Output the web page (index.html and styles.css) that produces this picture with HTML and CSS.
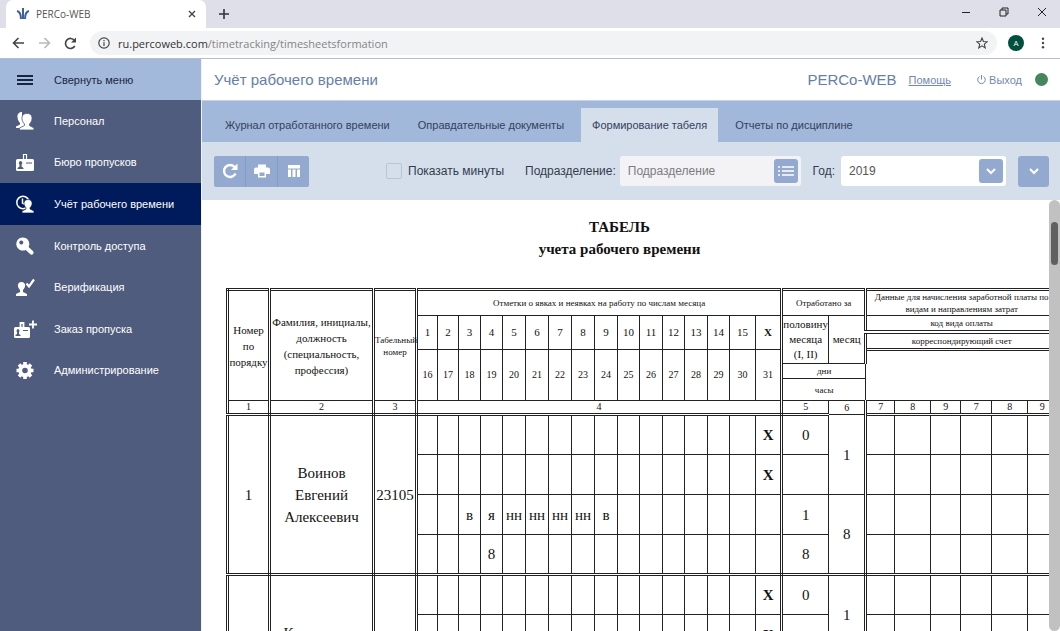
FILE: index.html
```html
<!DOCTYPE html>
<html lang="ru">
<head>
<meta charset="utf-8">
<title>PERCo-WEB</title>
<link rel="stylesheet" href="styles.css">
</head>
<body>
<div class="window">
  <header class="chrome">
    <div class="tabstrip">
      <div class="browser-tab">
        <svg class="favicon" viewBox="0 0 14 12" fill="none" stroke="#3d6199" stroke-width="2"><path d="M7 0V11"/><path d="M1 3Q5 4 5 11"/><path d="M13 3Q9 4 9 11"/></svg>
        <span class="browser-tab-title">PERCo-WEB</span>
        <button class="plain" aria-label="Закрыть вкладку"><svg width="8" height="8" viewBox="0 0 8 8" stroke="#444" stroke-width="1.4"><path d="M1 1L7 7M7 1L1 7"/></svg></button>
      </div>
      <button class="plain new-tab" aria-label="Новая вкладка"><svg width="10" height="10" viewBox="0 0 10 10" stroke="#333" stroke-width="1.6"><path d="M5 0V10M0 5H10"/></svg></button>
      <div class="window-controls">
        <button class="plain" aria-label="Свернуть"><svg width="10" height="10" viewBox="0 0 10 10" stroke="#222"><path d="M1 5.5H9"/></svg></button>
        <button class="plain" aria-label="Развернуть"><svg width="10" height="10" viewBox="0 0 10 10" fill="none" stroke="#222"><path d="M1 3H7V9H1ZM3 3V1H9V7H7"/></svg></button>
        <button class="plain" aria-label="Закрыть"><svg width="10" height="10" viewBox="0 0 10 10" stroke="#222"><path d="M1 1L9 9M9 1L1 9"/></svg></button>
      </div>
    </div>
    <div class="address-row">
      <button class="plain" aria-label="Назад"><svg width="13" height="12" viewBox="0 0 13 12" fill="none" stroke="#444" stroke-width="1.6"><path d="M12 6H2M6.500 1L1.500 6L6.500 11"/></svg></button>
      <button class="plain" aria-label="Вперёд"><svg width="13" height="12" viewBox="0 0 13 12" fill="none" stroke="#b9b9bb" stroke-width="1.6"><path d="M1 6H11M6.500 1L11.500 6L6.500 11"/></svg></button>
      <button class="plain" aria-label="Обновить"><svg width="13" height="13" viewBox="0 0 13 13" fill="none" stroke="#444" stroke-width="1.7"><path d="M10.800 9A5 5 0 1 1 10.500 3.500"/><path d="M12 .5V5.500H7Z" fill="#444" stroke="none"/></svg></button>
      <div class="address">
        <svg width="12" height="12" viewBox="0 0 12 12" fill="none" stroke="#444" stroke-width="1.200"><circle cx="6" cy="6" r="5.200"/><path d="M6 5.200V9M6 3V4.200"/></svg>
        <span class="url">ru.percoweb.com<span class="url-path">/timetracking/timesheetsformation</span></span>
        <svg width="12" height="12" viewBox="0 0 12 12" fill="none" stroke="#444" stroke-width="1.100"><path d="M6 1L7.400 4.500L11.200 4.800L8.300 7.200L9.200 10.900L6 8.900L2.800 10.900L3.700 7.200L.8 4.800L4.600 4.500Z"/></svg>
      </div>
      <span class="profile">A</span>
      <button class="plain" aria-label="Меню браузера"><svg width="4" height="12" viewBox="0 0 4 12" fill="#444"><circle cx="2" cy="1.800" r="1.200"/><circle cx="2" cy="6" r="1.200"/><circle cx="2" cy="10.200" r="1.200"/></svg></button>
    </div>
  </header>

  <div class="app">
    <aside class="sidebar">
      <button class="collapse"><svg width="16" height="12" viewBox="0 0 16 12" stroke="#1b2540" stroke-width="2"><path d="M0 2H16M0 6H16M0 10H16"/></svg>Свернуть меню</button>
      <nav class="menu">
        <a class="menu-item" href="#"><svg viewBox="0 0 22 20" fill="#fff"><path d="M8 1C4.500 1 3 3.500 3.500 6.500C3.700 9 5 11 6 12V13.500L2 15.500V17H9L12 14L8 8Z"/><path stroke="#4f5c7d" stroke-width=".8" d="M13 2.500C9 2.500 7.600 5 8 8C8.200 10.300 9.500 12 10.500 13V14.500L5.500 17V19H20V17L15.500 14.500V13C16.500 12 17.800 10.300 18 8C18.300 5 17 2.500 13 2.500Z"/></svg>Персонал</a>
        <a class="menu-item" href="#"><svg viewBox="0 0 22 20"><rect x="2" y="7" width="18" height="12" rx="1.500" fill="#fff"/><path d="M9.500 9V2.500H12.500V9" fill="none" stroke="#fff" stroke-width="1.200"/><path d="M12 11H18" stroke="#4f5c7d"/><path fill="#4f5c7d" d="M6.500 9A2 2 0 0 1 7.600 12.500V14.500L9.500 16V17H3.500V16L5.500 14.500V12.500A2 2 0 0 1 6.500 9Z"/></svg>Бюро пропусков</a>
        <a class="menu-item active" href="#"><svg viewBox="0 0 22 20" fill="#fff"><circle cx="9" cy="8.500" r="6.200" fill="none" stroke="#fff" stroke-width="1.500"/><path d="M8.500 4.500V9L11 10.500" fill="none" stroke="#fff" stroke-width="1.500"/><path stroke="#001b5c" stroke-width=".7" d="M14 5.500C11 5.500 9.700 7.500 10 9.800C10.100 11.500 11 12.800 12 13.800V15L8 17V19H20V17L16 15V13.800C17 12.800 18 11.500 18.100 9.800C18.300 7.500 17 5.500 14 5.500Z"/></svg>Учёт рабочего времени</a>
        <a class="menu-item" href="#"><svg viewBox="0 0 22 20"><path d="M11 10.500L17.500 16.500" stroke="#fff" stroke-width="4.200" stroke-linecap="round"/><path fill="#fff" fill-rule="evenodd" d="M8.800 1.500A6.500 6.500 0 1 0 8.810 1.500ZM7.300 4.500A2 2 0 1 1 7.290 4.500Z"/></svg>Контроль доступа</a>
        <a class="menu-item" href="#"><svg viewBox="0 0 22 20" fill="#fff"><path d="M7.500 5C5 5 3.700 6.800 3.900 8.800C4 10.500 5 12 6 13V15L2 17V19H13V17L9 15V13C10 12 11 10.500 11.100 8.800C11.300 6.800 10 5 7.500 5Z"/><path d="M12.500 6.500L15 9.500L20 2.500" fill="none" stroke="#fff" stroke-width="2.200"/></svg>Верификация</a>
        <a class="menu-item" href="#"><svg class="wide" viewBox="0 0 26 20"><rect x="2" y="8" width="16" height="11" rx="1.500" fill="#fff"/><path d="M8.500 10V4H11.500V10M17 5.500H25M21 1.500V9.500" fill="none" stroke="#fff" stroke-width="1.800"/><path d="M11 11.500H16" stroke="#4f5c7d"/><path fill="#4f5c7d" d="M6 10A1.800 1.800 0 0 1 7 13V15L8.500 16V17H3.500V16L5 15V13A1.800 1.800 0 0 1 6 10Z"/></svg>Заказ пропуска</a>
        <a class="menu-item" href="#"><svg viewBox="0 0 22 20"><circle cx="11" cy="10.500" r="4.700" fill="none" stroke="#fff" stroke-width="3.800"/><path stroke="#fff" stroke-width="3.600" d="M11 2V5M11 16V19M2.500 10.500H5.500M16.500 10.500H19.500M5 4.500L7.200 6.700M14.800 14.300L17 16.500M17 4.500L14.800 6.700M7.200 14.300L5 16.500"/></svg>Администрирование</a>
      </nav>
    </aside>

    <main class="content">
      <div class="page-header">
        <h1 class="page-title">Учёт рабочего времени</h1>
        <span class="brand">PERCo-WEB</span>
        <a class="help" href="#">Помощь</a>
        <a class="logout" href="#"><svg width="9" height="9" viewBox="0 0 9 9" fill="none" stroke="#7388b0"><path d="M2.500 1.500A3.800 3.800 0 1 0 6.500 1.500M4.500 0V4.500"/></svg>Выход</a>
        <span class="status"></span>
      </div>
      <nav class="tabs">
        <a class="tab" href="#">Журнал отработанного времени</a>
        <a class="tab" href="#">Оправдательные документы</a>
        <a class="tab current" href="#">Формирование табеля</a>
        <a class="tab" href="#">Отчеты по дисциплине</a>
      </nav>
      <div class="toolbar">
        <div class="button-group">
          <button class="tool" aria-label="Обновить"><svg width="16" height="16" viewBox="0 0 16 16" fill="none" stroke="#fff" stroke-width="2.400"><path d="M13.500 10.500A6 6 0 1 1 12.500 4"/><path d="M15.500 .5V7H9Z" fill="#fff" stroke="none"/></svg></button>
          <button class="tool" aria-label="Печать"><svg width="16" height="16" viewBox="0 0 16 16"><path fill="#fff" d="M4 1.500H12V4.500H14A2 2 0 0 1 16 6.500V11H12V14.500H4V11H0V6.500A2 2 0 0 1 2 4.500H4Z"/><path fill="#94a9cf" d="M5.500 9.500H10.500V13H5.500Z"/></svg></button>
          <button class="tool" aria-label="Столбцы"><svg width="14" height="14" viewBox="0 0 14 14" fill="#fff"><path d="M1 1H13V4.500H1ZM1 5.500H4V13H1ZM5.500 5.500H8.500V13H5.500ZM10 5.500H13V13H10Z"/></svg></button>
        </div>
        <label class="minutes"><input class="tick" type="checkbox">Показать минуты</label>
        <label class="caption" for="dept">Подразделение:</label>
        <div class="field dept">
          <input class="field-input" id="dept" type="text" placeholder="Подразделение">
          <button class="field-button" aria-label="Выбрать подразделение"><svg width="16" height="10" viewBox="0 0 16 10" stroke="#fff" stroke-width="1.700"><path d="M0 1H2M4 1H16M0 5H2M4 5H16M0 9H2M4 9H16"/></svg></button>
        </div>
        <label class="caption year-caption" for="year">Год:</label>
        <div class="field year">
          <select class="field-input" id="year"><option>2019</option></select>
          <span class="field-arrow"><svg width="10" height="7" viewBox="0 0 10 7" fill="none" stroke="#fff" stroke-width="2"><path d="M1 1L5 5L9 1"/></svg></span>
        </div>
        <button class="more" aria-label="Ещё"><svg width="10" height="7" viewBox="0 0 10 7" fill="none" stroke="#fff" stroke-width="2"><path d="M1 1L5 5L9 1"/></svg></button>
      </div>

      <div class="viewport">
        <div class="sheet">
          <h2 class="sheet-title">ТАБЕЛЬ<br>учета рабочего времени</h2>
          <table class="timesheet">
            <colgroup>
              <col class="w42"><col class="w104"><col class="w43">
              <col class="w21"><col class="w21"><col class="w22"><col class="w22"><col class="w23"><col class="w23"><col class="w23"><col class="w23"><col class="w23"><col class="w22"><col class="w23"><col class="w22"><col class="w23"><col class="w22"><col class="w26"><col class="w26">
              <col class="w47"><col class="w37">
              <col class="w29"><col class="w36"><col class="w30"><col class="w31"><col class="w36"><col class="w30">
            </colgroup>
            <thead>
              <tr class="h26"><th class="bar mid roomy" rowspan="6">Номер<br>по<br>порядку</th><th class="bar mid roomy" rowspan="6">Фамилия, инициалы,<br>должность<br>(специальность,<br>профессия)</th><th class="bar" rowspan="6">Табельный<br>номер</th><th class="bar" colspan="16">Отметки о явках и неявках на работу по числам месяца</th><th class="bar" colspan="2">Отработано за</th><th colspan="6">Данные для начисления заработной платы по<br>видам и направлениям затрат</th></tr>
              <tr class="h16"><th class="mid" rowspan="2">1</th><th class="mid" rowspan="2">2</th><th class="mid" rowspan="2">3</th><th class="mid" rowspan="2">4</th><th class="mid" rowspan="2">5</th><th class="mid" rowspan="2">6</th><th class="mid" rowspan="2">7</th><th class="mid" rowspan="2">8</th><th class="mid" rowspan="2">9</th><th class="mid" rowspan="2">10</th><th class="mid" rowspan="2">11</th><th class="mid" rowspan="2">12</th><th class="mid" rowspan="2">13</th><th class="mid" rowspan="2">14</th><th class="mid" rowspan="2">15</th><th class="bar mid strong" rowspan="2">X</th><th class="mid" rowspan="3">половину<br>месяца<br>(I, II)</th><th class="bar mid" rowspan="3">месяц</th><th class="under wide-rule" colspan="6">код вида оплаты</th></tr>
              <tr class="h18"><th class="under" colspan="6">корреспондирующий счет</th></tr>
              <tr class="h14"><th class="num" rowspan="3">16</th><th class="num" rowspan="3">17</th><th class="num" rowspan="3">18</th><th class="num" rowspan="3">19</th><th class="num" rowspan="3">20</th><th class="num" rowspan="3">21</th><th class="num" rowspan="3">22</th><th class="num" rowspan="3">23</th><th class="num" rowspan="3">24</th><th class="num" rowspan="3">25</th><th class="num" rowspan="3">26</th><th class="num" rowspan="3">27</th><th class="num" rowspan="3">28</th><th class="num" rowspan="3">29</th><th class="num" rowspan="3">30</th><th class="bar num" rowspan="3">31</th><th colspan="6" rowspan="3"></th></tr>
              <tr class="h15"><th colspan="2">дни</th></tr>
              <tr class="h22"><th colspan="2">часы</th></tr>
              <tr class="h14"><th class="bar under num">1</th><th class="bar under num">2</th><th class="bar under num">3</th><th class="bar under num" colspan="16">4</th><th class="under num">5</th><th class="bar num">6</th><th class="under num">7</th><th class="under num">8</th><th class="under num">9</th><th class="under num">7</th><th class="under num">8</th><th class="under num">9</th></tr>
            </thead>
            <tbody class="person">
              <tr><td class="bar under" rowspan="4">1</td><td class="bar under" rowspan="4">Воинов<br>Евгений<br>Алексеевич</td><td class="bar under" rowspan="4">23105</td><td></td><td></td><td></td><td></td><td></td><td></td><td></td><td></td><td></td><td></td><td></td><td></td><td></td><td></td><td></td><td class="bar strong">X</td><td>0</td><td class="bar" rowspan="2">1</td><td></td><td></td><td></td><td></td><td></td><td></td></tr>
              <tr><td></td><td></td><td></td><td></td><td></td><td></td><td></td><td></td><td></td><td></td><td></td><td></td><td></td><td></td><td></td><td class="bar strong">X</td><td></td><td></td><td></td><td></td><td></td><td></td><td></td></tr>
              <tr><td></td><td></td><td>в</td><td>я</td><td>нн</td><td>нн</td><td>нн</td><td>нн</td><td>в</td><td></td><td></td><td></td><td></td><td></td><td></td><td class="bar"></td><td>1</td><td class="bar under" rowspan="2">8</td><td></td><td></td><td></td><td></td><td></td><td></td></tr>
              <tr class="last"><td></td><td></td><td></td><td>8</td><td></td><td></td><td></td><td></td><td></td><td></td><td></td><td></td><td></td><td></td><td></td><td class="bar"></td><td>8</td><td></td><td></td><td></td><td></td><td></td><td></td></tr>
            </tbody>
            <tbody class="person">
              <tr><td class="bar under" rowspan="4"></td><td class="bar under" rowspan="4">Комиссаров<br>&nbsp;<br>&nbsp;</td><td class="bar under" rowspan="4"></td><td></td><td></td><td></td><td></td><td></td><td></td><td></td><td></td><td></td><td></td><td></td><td></td><td></td><td></td><td></td><td class="bar strong">X</td><td>0</td><td class="bar" rowspan="2">1</td><td></td><td></td><td></td><td></td><td></td><td></td></tr>
              <tr><td></td><td></td><td></td><td></td><td></td><td></td><td></td><td></td><td></td><td></td><td></td><td></td><td></td><td></td><td></td><td class="bar strong">X</td><td></td><td></td><td></td><td></td><td></td><td></td><td></td></tr>
              <tr><td></td><td></td><td></td><td></td><td></td><td></td><td></td><td></td><td></td><td></td><td></td><td></td><td></td><td></td><td></td><td class="bar"></td><td></td><td class="bar under" rowspan="2"></td><td></td><td></td><td></td><td></td><td></td><td></td></tr>
              <tr class="last"><td></td><td></td><td></td><td></td><td></td><td></td><td></td><td></td><td></td><td></td><td></td><td></td><td></td><td></td><td></td><td class="bar"></td><td></td><td></td><td></td><td></td><td></td><td></td><td></td></tr>
            </tbody>
          </table>
        </div>
        <div class="scroll-track"><div class="scroll-thumb"></div></div>
      </div>
    </main>
  </div>
</div>
</body>
</html>
```
FILE: styles.css
```css
* { box-sizing: border-box; }
body { margin: 0; font-family: "Liberation Sans", Arial, sans-serif; font-size: 11px; color: #333b4d; }
button { font: inherit; border: 0; padding: 0; cursor: pointer; }
a { color: inherit; text-decoration: none; }
svg { display: block; flex: none; }
.plain { background: none; display: flex; }
.window { display: flex; flex-direction: column; height: 100vh; overflow: hidden; background: #fff; }

/* Browser frame */
.chrome { flex: none; font-family: "Open Sans", "Noto Sans", sans-serif; border-bottom: 1px solid #b9bccb; }
.tabstrip { display: flex; align-items: center; height: 28px; padding-left: 6px; background: #dfdfe9; }
.browser-tab { display: flex; align-items: center; width: 200px; height: 28px; padding: 0 10px; border-radius: 7px 7px 0 0; background: #fff; }
.favicon { width: 14px; height: 12px; }
.browser-tab-title { flex: 1; margin-left: 6px; font-size: 10px; color: #555; }
.new-tab { margin-left: 13px; }
.window-controls { display: flex; gap: 28px; margin-left: auto; padding: 0 13px 4px 0; }
.address-row { display: flex; align-items: center; height: 30px; padding: 0 15px 0 12px; background: #fff; }
.address-row > .plain { margin-right: 13px; }
.address-row > .plain:last-child { margin: 0 0 0 17px; }
.address { display: flex; flex: 1; align-items: center; height: 24px; margin-right: 11px; padding: 0 9px 0 8px; border-radius: 12px; background: #f2f3f4; }
.url { flex: 1; margin-left: 8px; font-size: 11px; color: #333; }
.url-path { color: #858585; }
.profile { width: 16px; height: 16px; border-radius: 50%; background: #00503d; color: #fff; font-size: 8px; line-height: 16px; text-align: center; }

/* Side menu */
.app { display: flex; flex: 1; min-height: 0; }
.sidebar { flex: none; width: 201px; background: #4f5c7d; }
.collapse { display: flex; align-items: center; gap: 21px; width: 100%; height: 41px; padding-left: 17px; background: #a2b9db; color: #1b2540; }
.menu { display: flex; flex-direction: column; height: 291px; }
.menu-item { display: flex; flex: 1; align-items: center; padding-left: 14px; color: #fff; }
.menu-item svg { width: 22px; height: 20px; margin-right: 18px; }
.menu-item svg.wide { width: 26px; margin: 0 16px 0 -2px; }
.menu-item.active { background: #001b5c; }

/* Page header, tabs, toolbar */
.content { display: flex; flex: 1; flex-direction: column; min-width: 0; border-left: 1px solid #eef2f8; }
.page-header { display: flex; flex: none; align-items: center; height: 42px; padding: 0 12px; border-bottom: 1px solid #c5d3e6; color: #6580a8; }
.page-title { margin: 0; font-size: 15px; font-weight: 400; }
.brand { margin-left: auto; font-size: 15px; }
.help { margin-left: 12px; color: #7388b0; text-decoration: underline; }
.logout { display: flex; align-items: center; gap: 3px; margin-left: 26px; color: #7388b0; }
.status { width: 13px; height: 13px; margin-left: 13px; border-radius: 50%; background: #44875f; }
.tabs { display: flex; flex: none; align-items: flex-end; gap: 6px; height: 41px; padding-left: 12px; background: #a1b8da; }
.tab { height: 34px; padding: 0 11px; line-height: 34px; white-space: nowrap; color: #33415c; }
.tab.current { background: #d5dfec; }
.toolbar { display: flex; flex: none; align-items: center; height: 58px; padding: 0 11px 0 12px; background: #d5dfec; font-size: 12px; }
.button-group { display: flex; gap: 1px; border-radius: 3px; overflow: hidden; background: #859cc5; }
.tool { display: flex; align-items: center; justify-content: center; width: 31px; height: 31px; background: #94a9cf; }
.minutes { display: flex; align-items: center; gap: 6px; margin-left: 77px; white-space: nowrap; }
.tick { appearance: none; width: 16px; height: 16px; margin: 0; border: 1px solid #bcc4d2; border-radius: 2px; }
.caption { margin: 0 4px 0 21px; }
.year-caption { margin: 0 6px 0 12px; }
.field { position: relative; display: flex; align-items: center; height: 30px; padding-right: 3px; border-radius: 3px; background: #fff; }
.dept { flex: 181 1 0; background: #f3f3f5; }
.year { flex: 165 1 0; }
.field-input { flex: 1; width: 0; min-width: 0; height: 30px; padding: 0 8px; border: 0; background: none; font: inherit; color: #555; appearance: none; }
.field-input::placeholder { color: #7c7c80; }
.field-button, .field-arrow, .more { display: flex; flex: none; align-items: center; justify-content: center; width: 24px; height: 24px; border-radius: 3px; background: #94a9cf; }
.field-arrow { position: absolute; right: 3px; pointer-events: none; }
.field { min-width: 0; padding-left: 0; }
.dept, .year { flex-basis: 0; }
.more { width: 31px; height: 31px; margin-left: 12px; }

/* Timesheet */
.viewport { display: flex; flex: 1; min-height: 0; }
.sheet { flex: 1; min-width: 0; overflow: hidden; padding: 16px 0 0 24px; color: #111; font-family: "Liberation Serif", "Times New Roman", serif; }
.sheet-title { margin: 0 36px 28px 0; font-size: 15px; line-height: 22px; text-align: center; }
.scroll-track { flex: none; width: 11px; padding: 22px 2px; border-radius: 6px; background: #c1c1c1; }
.scroll-thumb { height: 43px; border-radius: 4px; background: #606060; }
.timesheet { width: 833px; table-layout: fixed; border-collapse: collapse; border: 3px double #222; }
.timesheet th, .timesheet td { padding: 0; border: 1px solid #222; text-align: center; vertical-align: middle; white-space: nowrap; }
.timesheet th { font-size: 9px; font-weight: 400; line-height: 12px; }
.timesheet td { font-size: 15px; line-height: 22px; }
.timesheet .mid { font-size: 11px; line-height: 15px; }
.timesheet .roomy { line-height: 16px; }
.timesheet .num { font-size: 10px; }
.timesheet .strong { font-weight: 700; }
.timesheet .bar { border-right: 3px double #222; }
.timesheet .under, .timesheet .last td { border-bottom: 3px double #222; }
.timesheet .wide-rule { border-bottom-width: 4px; }
.person tr { height: 40px; }
.h14 { height: 14px; }
.h15 { height: 15px; }
.h16 { height: 16px; }
.h18 { height: 18px; }
.h22 { height: 22px; }
.h26 { height: 26px; }
.w21 { width: 21px; }
.w22 { width: 22px; }
.w23 { width: 23px; }
.w26 { width: 26px; }
.w29 { width: 29px; }
.w30 { width: 30px; }
.w31 { width: 31px; }
.w36 { width: 36px; }
.w37 { width: 37px; }
.w42 { width: 42px; }
.w43 { width: 43px; }
.w47 { width: 47px; }
.w104 { width: 104px; }
```
